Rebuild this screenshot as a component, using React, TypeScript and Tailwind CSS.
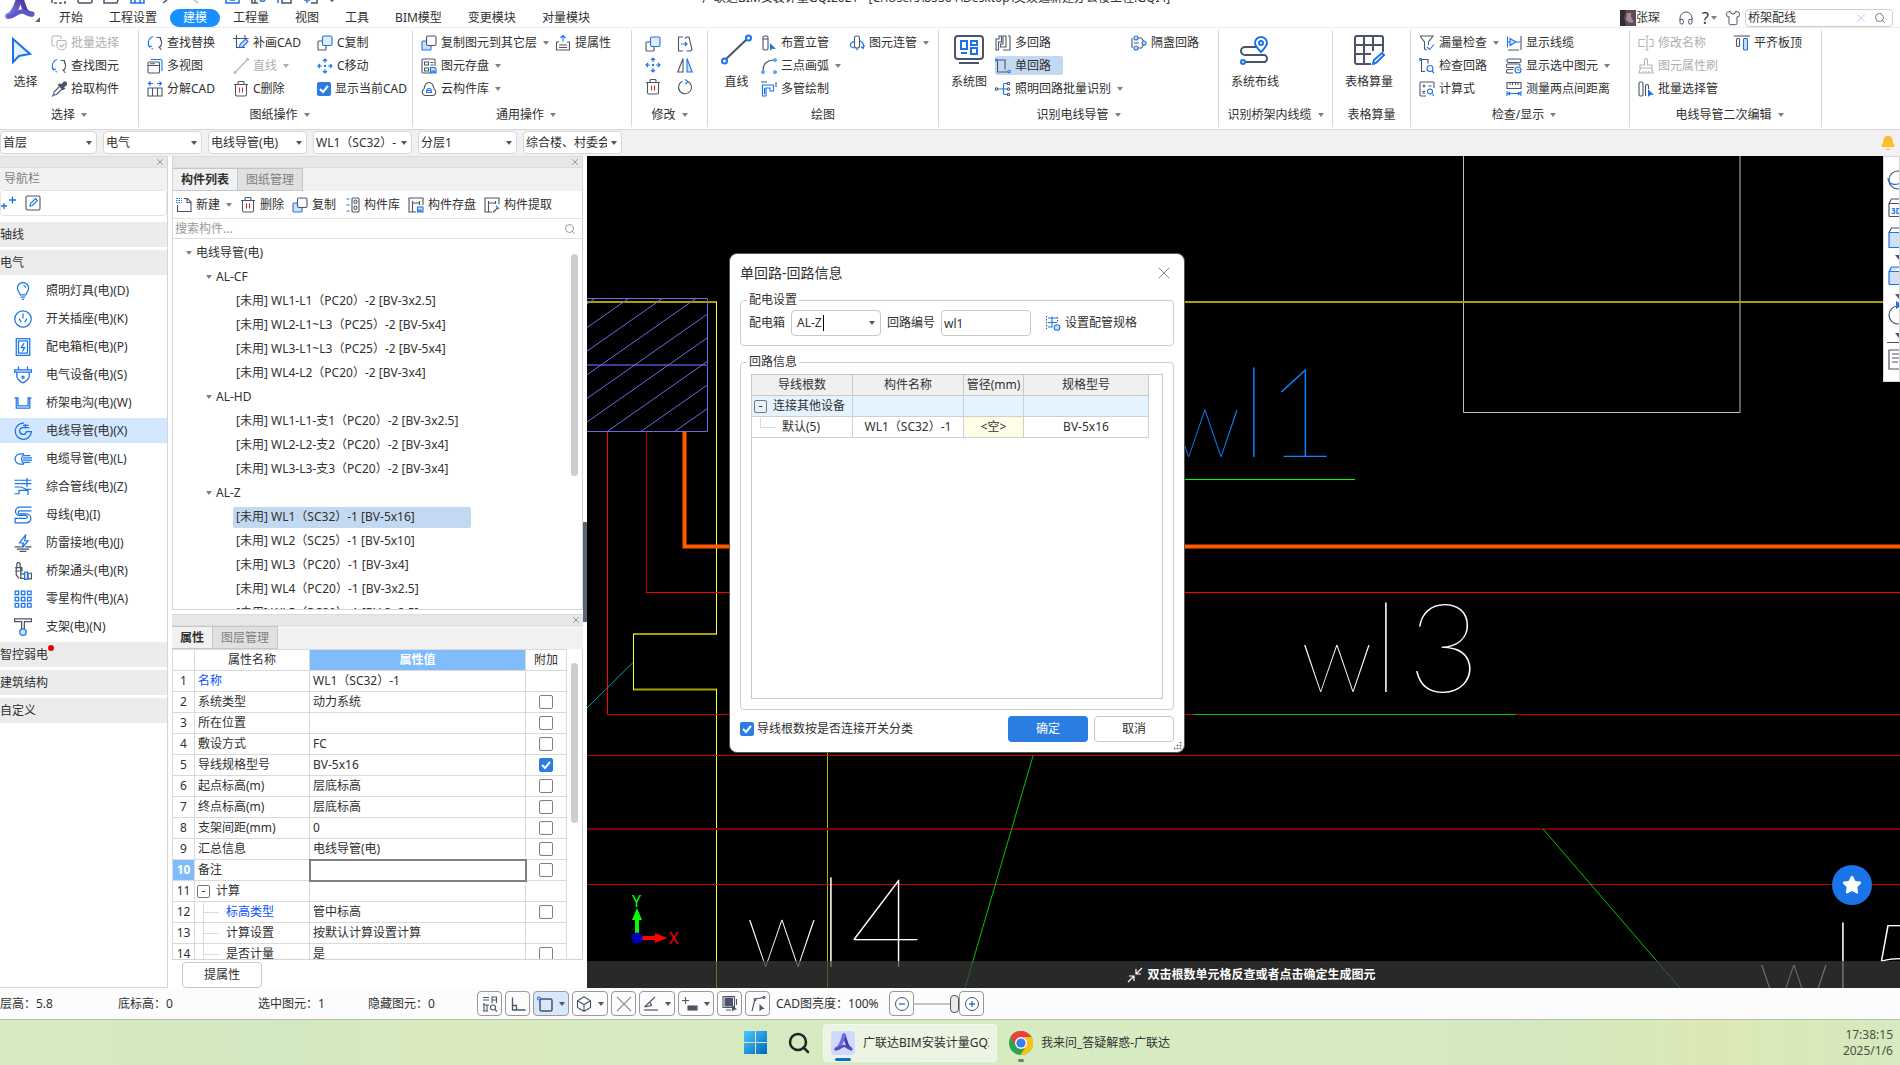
import React from 'react';
import { Headphones, Shirt, Search, X, Star, Bell } from 'lucide-react';

const D = '#4b5468';
const B = '#1a73e8';
const R = '#d33030';
const L = '#cfe0f8';

// small line icons, all on a 16 x 16 grid
const icons: Record<string, React.ReactNode> = {
    batchSelect: <g stroke="#b5b5b5"><path d="M4 11H2.500a1.500 1.500 0 0 1-1.500-1.500V2.500A1.500 1.500 0 0 1 2.500 1h6A1.500 1.500 0 0 1 10 2.500V4" /><path d="M7.500 5.500h6a1.500 1.500 0 0 1 1.500 1.500v3.500a4.500 4.500 0 0 1-9 0V7a1.500 1.500 0 0 1 1.500-1.500zM8.500 10l2 2 3-3" /></g>,
    find: <><path stroke={B} d="M6 1.500A6.500 6.500 0 0 0 2.500 11.500M1 9.500l1.500 2.500L5 11M4.500 13.500L6 14" /><path d="M9.500 2.500h4v3M13 3c2.500 3 2 7-.500 9.500M11.500 11.500l3 3.500" /></>,
    picker: <><path fill={D} d="M9 3l1.500 1L12.500 1.500a1.500 1.500 0 0 1 2.500 2.500L12.500 6l1 1.500-1.500 1L7.500 4z" /><path d="M8.500 5.500L3 11l-.500 3 3-.500L11 8" /><path stroke={B} d="M1 15.500l2-2" /></>,
    views: <><path stroke={B} d="M4 1.500h9.500a1.500 1.500 0 0 1 1.500 1.500v10" /><rect x="1" y="4" width="11.500" height="11" rx="1" /><path d="M1 7.500h11.500M3 5.800h5" /></>,
    split: <><path stroke={B} d="M6 2.500H1.500M3.500.500l-2 2 2 2M10 2.500h4.500M12.500.500l2 2-2 2" /><path d="M1 9V7h14v2M1 9v6h14V9M5.500 7v8M10.500 7v8" /></>,
    drawCad: <><path d="M3.500 0v12.500H12M0 3.500h12M12 3.500V0M12.500 3.500h3" /><path stroke={B} fill={L} d="M6.500 12.500L7 9.500 12.500 4 15 6.500 9.500 12z" /></>,
    lineOff: <g stroke="#b5b5b5"><path d="M3 13.500L13.500 2.500" /><circle cx="2" cy="14.500" r="1" /><circle cx="14.500" cy="1.500" r="1" /></g>,
    trash: <><path d="M1 3.500h14M5 3.500V1.500a1 1 0 0 1 1-1h4a1 1 0 0 1 1 1v2M2.500 3.500v10A1.500 1.500 0 0 0 4 15h8a1.500 1.500 0 0 0 1.500-1.500v-10" /><path stroke={R} d="M6.500 6.500v5M9.500 6.500v5" /></>,
    copy: <><path d="M5 6H2a1 1 0 0 0-1 1v7a1 1 0 0 0 1 1h6a1 1 0 0 0 1-1v-3" /><rect x="5.500" y="1" width="9.500" height="9.500" rx="1.500" stroke={B} fill="#e1edfc" /></>,
    copyDark: <><path stroke={B} fill={L} d="M5 6H2a1 1 0 0 0-1 1v7a1 1 0 0 0 1 1h7a1 1 0 0 0 1-1v-3z" /><rect x="5.500" y="1" width="9.500" height="9.500" rx="1.500" fill="#fff" /></>,
    move: <g stroke={B}><path d="M8 1v4M6 3l2-2 2 2M8 15v-4M6 13l2 2 2-2M1 8h4M3 6L1 8l2 2M15 8h-4M13 6l2 2-2 2" /><circle cx="8" cy="8" r=".6" /></g>,
    save: <><path d="M9 15H2a1 1 0 0 1-1-1V2a1 1 0 0 1 1-1h11a1 1 0 0 1 1 1v6M3.500 4h4v3h-4zM3.500 10h4v3h-4zM9.500 4.500h3M9.500 7h3" /><path stroke={B} fill={L} d="M9.500 9.500h4L15 11v4H9.500zM11 15v-2h2.500v2" /></>,
    cloud: <><path d="M4 14.500a3.500 3.500 0 0 1-1-6.500C3.500 4 5.500 1.500 8 1.500S12.500 4 13 8a3.500 3.500 0 0 1-1 6.500z" /><path stroke={B} d="M5.500 11.500c0-3 1-4 2.500-4s2.500 1 2.500 4zM6 9.500h4" /></>,
    lift: <><path stroke={B} d="M8 6.500v-6M5.500 3L8 .500 10.500 3" /><path d="M4 7H1.500v8h13V7H12M4 10h8M4 12.500h8" /></>,
    stretch: <><path d="M6 1H1.500v14H6M8 2.500L9.500 1h2.500l3 12.500-1.500 1.500h-4" /><path stroke={B} d="M4 8h6M8 6l2 2-2 2" /></>,
    mirror: <><path d="M6 1.500V15H.800z" /><path stroke={B} fill={L} d="M10 1.500V15h5.200z" /></>,
    rotate: <><path d="M11 2.500a6.500 6.500 0 1 1-5.500-.200" /><path stroke={B} d="M8 .500l3 2-2.500 2.500" /></>,
    pipeV: <><rect x="2" y="1" width="5" height="14" rx="1.500" /><path d="M2 4h5" /><path stroke="none" fill={B} d="M9 8l6 6-3.500-.200L9 15.500z" /></>,
    arc: <><path d="M2 12.500C2 6 6 2.500 12 2" /><g stroke={B}><circle cx="2" cy="14" r="1.300" /><circle cx="14" cy="2" r="1.300" /><circle cx="14" cy="14" r="1.300" /></g></>,
    multiPipe: <><path d="M0 1h6M15 1v5" /><path stroke={B} d="M1.500 15V4h11v6H9V7H5v8zM3.500 7v6" /></>,
    connect: <><rect x="5.500" y="1" width="5" height="12" rx="2" /><path stroke={B} d="M5 6.500c-5 2-5 5 0 6.500M11 6c4 2 4.500 4 3 7M12 11.500l2 2 1.500-3M8 13v2.500" /></>,
    multiLoop: <path d="M3.500 15H1V4h3V1h2.500v6H3.500zM8 1v8H5.500v3h5.500V1zM13 1h2v14H8" />,
    singleLoop: <><path d="M2.500 3v11H12M2.500 2H10v9.500" /><circle cx="1.500" cy="2" r="1" stroke={B} /><circle cx="14" cy="13.500" r="1.300" stroke={B} /></>,
    batchLoop: <><path stroke={B} d="M2.500 8H8M12 2.500H9.500a1 1 0 0 0-1 1v9a1 1 0 0 0 1 1H12M8.500 8H12" /><circle cx="1.500" cy="8" r="1.200" /><circle cx="13.500" cy="2.500" r="1.200" /><circle cx="13.500" cy="8" r="1.200" /><circle cx="13.500" cy="13.500" r="1.200" /></>,
    lampLoop: <><g stroke={B} fill={L}><circle cx="5" cy="3" r="2" /><circle cx="5" cy="13" r="2" /><circle cx="13" cy="8" r="2" /></g><path d="M1 3v10M7 3h3.500l2 3M7 13h3.500l2-3M3 8h5" /></>,
    funnel: <><path d="M1 1h13L9.500 7v3M1 1l4.500 6v7l2 1" /><path stroke={B} d="M8 12l2.500 2.500L15 9.500" /></>,
    checkLoop: <><path d="M2.500 1.500v12H6M2.500 1.500H9v4" /><circle cx="1.500" cy="1.500" r="1" stroke={B} /><g stroke={B}><circle cx="11" cy="10.500" r="3" /><path d="M13 13l2 2" /></g></>,
    calc: <><path d="M7 15H2a1 1 0 0 1-1-1V2a1 1 0 0 1 1-1h12a1 1 0 0 1 1 1v5M3.500 5h3M5 3.500v3M9.500 5h3M3.500 10l2.500 2.500M6 10l-2.500 2.500" /><g stroke={B}><circle cx="11" cy="10.500" r="2.500" /><path d="M13 12.500l2 2.500" /></g></>,
    showWire: <><path d="M15 1v14M2 15h11" /><path stroke={B} fill={L} d="M1.500 1.500v11M4 3.500l6 3.500-6 3.500zM1.500 7H4M10 7h4" /></>,
    showSel: <><rect x="1" y="1" width="14" height="3.500" rx="1.500" /><path d="M14 8.500V7a1 1 0 0 0-1-1H2a1 1 0 0 0 0 3.500h6M7 15H2a1.500 1.500 0 0 1 0-3.500h5" /><g stroke={B}><circle cx="12" cy="12" r="3" /><path d="M12 10.500V12h1.500" /></g></>,
    measure: <><path d="M1 1.500h14v6H1zM4 1.500v2.500M6.500 1.500v2.500M9.500 1.500v2.500M12 1.500v2.500" /><path stroke={B} d="M1 10v5M15 10v5M1 12.500h14M4 11l-2 1.500L4 14M12 11l2 1.500-2 1.500" /></>,
    rename: <g stroke="#b5b5b5"><path d="M7 4.500H1v7h6M11 4.500h4v7h-4M9 1v14M7.500 1h3M7.500 15h3" /></g>,
    brush: <g stroke="#b5b5b5"><path d="M6.500 7V2a1.500 1.500 0 0 1 3 0v5H14v3H2V7zM2.500 10L1 15h14l-1.500-5M5 15v-2M8 15v-2M11 15v-2" /></g>,
    selPipe: <><rect x="1" y="1" width="4" height="14" rx="1.500" /><path d="M7.500 15V5a1 1 0 0 1 3 0v3" /><path stroke="none" fill={B} d="M10 8l6 6-3-.200-3 2z" /></>,
    alignTop: <><path d="M0 1h16" /><rect x="2.500" y="3.500" width="3" height="8" rx="1" /><rect x="9.500" y="3.500" width="4" height="11.500" rx="1" stroke={B} fill={L} /></>,
    addNew: <><path d="M8 1.500h3.500L15 5v9.500H1.500V8M11 1.500V5.500h4" /><path stroke={B} strokeDasharray="1.500 1" d="M0 1.500h6M0 3.500h6M0 5.500h6" /></>,
    lib: <><path stroke={B} d="M5.500 2H1.500M5.500 8H1.500M5.500 14H1.500" strokeDasharray="3 1" /><rect x="8" y="1" width="7" height="14" rx="1" /><rect x="10" y="3" width="3" height="3.500" rx="1.500" /><rect x="10" y="9" width="3" height="3.500" rx="1.500" /></>,
    store: <><path d="M8 15H1V1h14v7M4.500 15V4M4.500 6h7M11.500 4v4" /><path stroke={B} fill={L} d="M9.500 10H15v5H9.500zM11 15v-2h2v2" /></>,
    extract: <><path d="M8 15H1V1h14v6M4.500 15V4M4.500 6h7M11.500 4v3M9 15.500l5-5" /><path stroke={B} d="M12 9l3 3" /></>,
    edit: <><rect x="1" y="1" width="14" height="14" rx="1.500" /><path stroke={B} d="M5 11l.500-2.500 5-5 2 2-5 5z" /></>,
    plus2: <path stroke={B} strokeWidth="1.300" d="M0 11h6M3 8v6M8 5h7M11.500 1.500v7" />,
    pipeSpec: <><path stroke={B} d="M7 1.500v11M3 3h9M3 7.500h9M3 12h4" /><path strokeDasharray="1.500 1.500" d="M1.500 1v13M12.500 2v6" /><circle cx="12" cy="12.500" r="2.800" stroke={B} fill={L} /></>,
    // navigation tree
    bulb: <g stroke={B}><path d="M5.500 11.500c0-2-2.500-3-2.500-6a5 5 0 0 1 10 0c0 3-2.500 4-2.500 6zM6 13.500h4M7 15.500h2M8.500 3a2.500 2.500 0 0 1 2 2" /></g>,
    socket: <g stroke={B}><circle cx="8" cy="8" r="7.300" /><path d="M8 3v4.500M4.500 7.500l2 3.500M11.500 7.500l-2 3.500" /></g>,
    box: <g stroke={B}><rect x="2" y=".600" width="12" height="14.800" /><rect x="4" y="2.600" width="8" height="10.800" /><path d="M9 4.500L6.500 8.500h3L7.500 12" /></g>,
    device: <g stroke={B}><path d="M.500 3.500h15v2H.500zM4 .500v3M12 .500v3M2.500 5.500v3.500c0 3 5.500 6 5.500 6s5.500-3 5.500-6V5.500" /><circle cx="8" cy="10" r="1" /></g>,
    tray: <path stroke={B} d="M.500 3.500h3v7h9v-7h3M2 3.500v9h12v-9" />,
    wire: <g stroke={B}><path d="M9 1A7.200 7.200 0 1 0 15.500 8.500H11a3 3 0 1 1-3-3.500h2V2M8 3h5M8 5h5.500" /></g>,
    cable: <g stroke={B}><path d="M9 3.500H5.500a4.500 4.500 0 0 0 0 9H9M9 3.500c-3 3-3 6 0 9M9 5h5.500M8 7h8M8 9h8M9 11h5.500" /></g>,
    pipes: <g stroke={B}><path d="M.500 2h15M.500 5h15M.500 8h6l4 2H15.500M.500 14h4V11h8v4M11.500 0v8" /></g>,
    bus: <g stroke={B}><path d="M15.500 1H5a3.700 3.700 0 0 0 0 7.400h5.500a1.300 1.300 0 0 1 0 2.600H1v4h10a3.700 3.700 0 0 0 0-8H5a1.300 1.300 0 0 1 0-2.600h10.500" /></g>,
    bolt: <><path stroke={B} d="M10.500.500L5 8h3.500L7 12.500 12.500 6H9.500z" /><path d="M.500 11.500H6M10 11.500h5.500M2.500 13.500h11M5 15.500h6" /></>,
    elbow: <><path d="M2 5h4v9.500h4M2 5v6.500L4.500 14.500M2.500 5V1.500l1-1h1l1 1V5M1 5h6V8H1M10 10.500H6M12.500 10v5H15.500v-5z" /><path stroke={B} d="M9.500 9h2.500v6.500H9.500z" /></>,
    grid9: <g stroke={B}>{[1, 6.500, 12].map((y) => [1, 6.500, 12].map((x) => <rect key={x + '-' + y} x={x} y={y} width="3.200" height="3.200" />))}</g>,
    support: <><path d="M.500.700h15v2.600H9.200V10H6.800V3.300H.500z" /><circle cx="8" cy="12.500" r="2.900" stroke={B} fill={L} /></>,
    // status bar
    stFind: <><path d="M1 1.500h6M1 4h6M10 7V1h4.500v6M10 4h4.500M2 7v8M1 9h6M5 9v6M1 15h5" /><circle cx="11" cy="11.500" r="2.500" /><path d="M13 13.500l2 2" /></>,
    ortho: <path strokeWidth="1.300" d="M2.500 1.500V14h13M2.500 9.500h4V14" />,
    rectSel: <><rect x="3" y="3" width="12" height="12" rx="1.500" strokeWidth="1.500" /><circle cx="2" cy="2.500" r="1.500" stroke={B} /></>,
    cube: <path d="M8 .700l6.500 4v6.800L8 15.300 1.500 11.500V4.700zM1.500 4.700L8 8.500l6.500-3.800M8 8.500v6.800" />,
    cross: <><path stroke="#8c919b" d="M1 1l14 14M15 1L1 15" /></>,
    angle: <><path d="M1.500 11L12 1M1.500 11l7-1.500L7 6" /><path stroke="#999" strokeWidth="2" d="M1 14h14" /></>,
    plusRect: <><path d="M0 4.500h7M3.500 1v7" /><rect x="6" y="10" width="9" height="4" fill={D} /></>,
    layers: <><rect x="2.500" y="1.500" width="8.500" height="9" fill={D} stroke="none" /><path d="M1 .500h11.500v11H1zM4 14h5M14.500 3v6" /><path fill={D} stroke="none" d="M10 8.500l5 5-2.500.300L10 15.500z" /></>,
    nodes: <><path d="M2 15L5 3l9-1.500" /><circle cx="5" cy="3.500" r="1" fill="#fff" /><circle cx="14" cy="1.500" r="1" fill="#fff" /><path fill={D} stroke="none" d="M9.500 8l5 5-2.500.300-2.500 2z" /></>,
};

function Icon({ name, size = 'h-4 w-4' }: { name: string; size?: string }) {
    return (
        <svg viewBox="0 0 16 16" className={size + ' shrink-0'} fill="none" stroke={D} strokeWidth="1.100">
            {icons[name]}
        </svg>
    );
}

function Tri({ className = 'text-[#808080]' }: { className?: string }) {
    return (
        <svg viewBox="0 0 6 4" className={'h-1 w-1.5 shrink-0 ' + className}>
            <path fill="currentColor" d="M0 0h6L3 4z" />
        </svg>
    );
}

function Check({ label, id, checked = false }: { label?: string; id?: string; checked?: boolean }) {
    return (
        <span className="relative inline-flex h-3.5 w-3.5 shrink-0">
            <input
                id={id}
                type="checkbox"
                aria-label={label}
                defaultChecked={checked}
                className="peer h-3.5 w-3.5 appearance-none rounded-xs border border-[#808080] bg-white checked:border-[#2b7de1] checked:bg-[#2b7de1]"
            />
            <svg viewBox="0 0 14 14" className="pointer-events-none absolute inset-0 hidden peer-checked:block" fill="none" stroke="#fff" strokeWidth="2">
                <path d="M3 7l3 3 5-6" />
            </svg>
        </span>
    );
}

interface ToolProps {
    icon: string;
    text: string;
    arrow?: boolean;
    off?: boolean;
    active?: boolean;
}

function Tool({ icon, text, arrow, off, active }: ToolProps) {
    return (
        <button
            disabled={off}
            className={
                'flex h-[19px] items-center gap-1 whitespace-nowrap rounded-xs ' +
                (off ? 'text-[#b0b0b0] ' : '') +
                (active ? 'bg-[#c3d9f2] pr-3' : '')
            }
        >
            <Icon name={icon} />
            {text}
            {arrow && <span className="ml-0.5"><Tri className={off ? 'text-[#b0b0b0]' : 'text-[#808080]'} /></span>}
        </button>
    );
}

function Col({ w = '', children }: { w?: string; children: React.ReactNode }) {
    return <div className={'flex shrink-0 flex-col items-start gap-1 ' + w}>{children}</div>;
}

function Group({ label, w, arrow = true, children }: { label: string; w: string; arrow?: boolean; children: React.ReactNode }) {
    return (
        <section className={'my-0.5 flex shrink-0 flex-col border-r border-[#dadada] ' + w}>
            <div className="flex h-[74px] pt-[3px]">{children}</div>
            <div className="flex h-6 items-center justify-center gap-1.5">
                {label}
                {arrow && <Tri />}
            </div>
        </section>
    );
}

function Big({ text, w, children }: { text: string; w: string; children: React.ReactNode }) {
    return (
        <button className={'flex h-[57px] shrink-0 flex-col items-center justify-between ' + w}>
            <svg viewBox="0 0 32 32" className="h-8 w-8" fill="none" stroke={D} strokeWidth="2">{children}</svg>
            {text}
        </button>
    );
}

const tabs = ['开始', '工程设置', '建模', '工程量', '视图', '工具', 'BIM模型', '变更模块', '对量模块'];

function Header() {
    return (
        <header className="relative bg-white">
            <svg viewBox="0 0 40 24" className="absolute left-0 top-0 h-6 w-10" fill="none" strokeLinecap="round">
                <defs>
                    <linearGradient id="logo" x1="0" y1="1" x2="1" y2="0"><stop stopColor="#8482ea" /><stop offset="1" stopColor="#453a9c" /></linearGradient>
                </defs>
                <path d="M20-4l4 11c1 4 4 7 8 7" stroke="#4a40a6" strokeWidth="5" />
                <path d="M8 16c6-1 9-10 12-20" stroke="url(#logo)" strokeWidth="6" />
                <path d="M9 16.500c6 0 7-5 13-5 4 0 6 4 10 3" stroke="#5f58c8" strokeWidth="4.500" />
                <path d="M40 17v5h-5z" fill="#666" />
            </svg>
            <div className="flex h-[9px] items-start overflow-hidden pl-[51px]">
                <svg viewBox="0 0 300 5" className="h-[5px] w-[300px]" fill="none" stroke={D} strokeWidth="1.500">
                    <path strokeDasharray="3 2" d="M1 0v3h13V0" />
                    <path d="M27 0v2l1 1h12l1-1V0M53 0v3h13l1-3" />
                    <path stroke={B} d="M80 0v3h13V0M84 0v3M89 0v3" />
                    <path d="M112 3l4-3" />
                    <path stroke="#bbb" d="M147 3l-4-3" />
                    <path stroke={B} d="M175 0v3h13V0M179 0h5" />
                    <path d="M201 0v3h6M204 0v3" />
                    <path stroke={B} d="M209 0a3 3 0 0 0 5 0" />
                    <path d="M231 0v3h9V0" />
                    <path stroke={B} d="M227 0v3M253 0h6M256 0v3" />
                    <path d="M260 3h6V0" />
                    <path stroke="none" fill={D} d="M279 0h4l-2 2z" />
                </svg>
                <span className="-mt-2.5 ml-[351px] whitespace-nowrap">广联达BIM安装计量GQI2021 - [C:\Users\85364\Desktop\美娱逛新建办公楼工程.GQI4]</span>
            </div>
            <div className="flex h-[19px] items-center justify-between border-b border-[#ececec] pl-[46px]">
                <nav className="flex h-full">
                    {tabs.map((t) => (
                        <button key={t} className={t === '建模' ? 'rounded-full bg-[#1890ff] px-[13px] text-white' : 'px-[13px]'}>
                            {t}
                        </button>
                    ))}
                </nav>
                <div className="flex items-center text-[#333]">
                    <svg viewBox="0 0 16 16" className="h-4 w-4">
                        <path fill="#5d4c58" d="M0 0h16v16H0z" />
                        <path fill="#342a36" d="M0 0h6l-2 8 2 8H0z" />
                        <path fill="#a08c94" d="M7 3h4v4l3 5-4 1-4-3z" />
                    </svg>
                    张琛
                    <Headphones className="ml-[18px] h-4 w-4 text-[#4b5468]" strokeWidth={1.5} />
                    <button className="mx-2 flex items-center gap-0.5 text-base">?<Tri /></button>
                    <Shirt className="h-4 w-4 text-[#4b5468]" strokeWidth={1.5} />
                    <label className="ml-1 mr-[7px] flex h-[18px] w-[148px] items-center rounded-sm border border-[#d0d0d0] px-0.5">
                        <input aria-label="搜索功能" defaultValue="桥架配线" className="min-w-0 flex-1 outline-none" />
                        <X className="mr-1.5 h-3.5 w-3.5 text-[#a5cdf5]" strokeWidth={1.5} />
                        <Search className="mr-1 h-3 w-3 text-[#777]" />
                    </label>
                </div>
            </div>
        </header>
    );
}

function Ribbon() {
    return (
        <div className="flex h-[102px] overflow-hidden border-b border-[#d4d4d4] bg-white">
            <Group label="选择" w="w-[139px]">
                <Big text="选择" w="w-[51px]">
                    <path stroke={B} fill="#eaf2fd" d="M3 6v23l6-6 11-2z" />
                </Big>
                <Col>
                    <Tool icon="batchSelect" text="批量选择" off />
                    <Tool icon="find" text="查找图元" />
                    <Tool icon="picker" text="拾取构件" />
                </Col>
            </Group>
            <Group label="图纸操作" w="w-[274px] pl-2">
                <Col w="w-[86px]">
                    <Tool icon="find" text="查找替换" />
                    <Tool icon="views" text="多视图" />
                    <Tool icon="split" text="分解CAD" />
                </Col>
                <Col w="w-[84px]">
                    <Tool icon="drawCad" text="补画CAD" />
                    <Tool icon="lineOff" text="直线" arrow off />
                    <Tool icon="trash" text="C删除" />
                </Col>
                <Col>
                    <Tool icon="copy" text="C复制" />
                    <Tool icon="move" text="C移动" />
                    <label htmlFor="cadShow" className="flex h-[19px] items-center gap-1 whitespace-nowrap">
                        <Check id="cadShow" checked />
                        显示当前CAD
                    </label>
                </Col>
            </Group>
            <Group label="通用操作" w="w-[219px] pl-2">
                <Col w="w-[134px]">
                    <Tool icon="copyDark" text="复制图元到其它层" arrow />
                    <Tool icon="save" text="图元存盘" arrow />
                    <Tool icon="cloud" text="云构件库" arrow />
                </Col>
                <Col><Tool icon="lift" text="提属性" /></Col>
            </Group>
            <Group label="修改" w="w-[76px]">
                <div className="grid h-[65px] grid-cols-2 items-center gap-x-4 pl-[13px]">
                    {['copy', 'stretch', 'move', 'mirror', 'trash', 'rotate'].map((n) => (
                        <button key={n} aria-label={n}><Icon name={n} /></button>
                    ))}
                </div>
            </Group>
            <Group label="绘图" w="w-[231px]" arrow={false}>
                <Big text="直线" w="w-[53px] pl-1">
                    <path d="M5 26L25 7" />
                    <g stroke={B}><circle cx="3.500" cy="28" r="2.500" /><circle cx="27.500" cy="5" r="2.500" /></g>
                </Big>
                <Col w="w-[88px]">
                    <Tool icon="pipeV" text="布置立管" />
                    <Tool icon="arc" text="三点画弧" arrow />
                    <Tool icon="multiPipe" text="多管绘制" />
                </Col>
                <Col><Tool icon="connect" text="图元连管" arrow /></Col>
            </Group>
            <Group label="识别电线导管" w="w-[280px]">
                <Big text="系统图" w="w-14 pl-1">
                    <rect x="2" y="3" width="28" height="23" rx="3" />
                    <g stroke={B}><path d="M8 8h6v8H8zM18 8h6v4h-6zM18 15h6v6h-6zM8 20h6" /></g>
                    <path d="M6 30h20" />
                </Big>
                <Col w="w-[136px]">
                    <Tool icon="multiLoop" text="多回路" />
                    <Tool icon="singleLoop" text="单回路" active />
                    <Tool icon="batchLoop" text="照明回路批量识别" arrow />
                </Col>
                <Col><Tool icon="lampLoop" text="隔盏回路" /></Col>
            </Group>
            <Group label="识别桥架内线缆" w="w-[114px]">
                <Big text="系统布线" w="w-[72px]">
                    <path d="M18 14H6a4 4 0 0 0 0 8h20a4 4 0 0 1 0 7H6" />
                    <g stroke={B}><path d="M22 19c-4-4-6-6-6-9a6 6 0 0 1 12 0c0 3-2 5-6 9z" /><circle cx="22" cy="10" r="2" /><circle cx="4" cy="29" r="2" /></g>
                </Big>
            </Group>
            <Group label="表格算量" w="w-[78px]" arrow={false}>
                <Big text="表格算量" w="w-[72px]">
                    <path d="M18 31H4a2 2 0 0 1-2-2V5a2 2 0 0 1 2-2h24a2 2 0 0 1 2 2v14M2 12h28M2 21h16M11 3v28M20 3v15" />
                    <path stroke={B} d="M20 31l1-4 8-7 2 2-8 8z" />
                </Big>
            </Group>
            <Group label="检查/显示" w="w-[219px] pl-2">
                <Col w="w-[87px]">
                    <Tool icon="funnel" text="漏量检查" arrow />
                    <Tool icon="checkLoop" text="检查回路" />
                    <Tool icon="calc" text="计算式" />
                </Col>
                <Col>
                    <Tool icon="showWire" text="显示线缆" />
                    <Tool icon="showSel" text="显示选中图元" arrow />
                    <Tool icon="measure" text="测量两点间距离" />
                </Col>
            </Group>
            <Group label="电线导管二次编辑" w="w-[192px] pl-2">
                <Col w="w-24">
                    <Tool icon="rename" text="修改名称" off />
                    <Tool icon="brush" text="图元属性刷" off />
                    <Tool icon="selPipe" text="批量选择管" />
                </Col>
                <Col><Tool icon="alignTop" text="平齐板顶" /></Col>
            </Group>
        </div>
    );
}

const filters = ['首层', '电气', '电线导管(电)', 'WL1（SC32）-1', '分层1', '综合楼、村委会'];

function Filters() {
    return (
        <div className="flex h-[26px] items-start gap-1.5 bg-[#f1f1f1] pt-px">
            {filters.map((f, i) => (
                <span key={f} className={'relative h-[23px] ' + (i === 0 ? 'w-[97px]' : 'w-[99px]')}>
                    <select aria-label={f} className="h-full w-full appearance-none overflow-hidden rounded-sm border border-[#d8d8d8] bg-white pl-0.5 pr-3.5">
                        <option>{f}</option>
                    </select>
                    <span className="pointer-events-none absolute right-[5px] top-2.5 flex"><Tri className="text-[#555]" /></span>
                </span>
            ))}
            <Bell className="ml-auto mr-1 mt-1 h-4 w-4 text-[#fbc02d]" fill="#fbc02d" />
        </div>
    );
}

const navItems = [
    { icon: 'bulb', text: '照明灯具(电)(D)' },
    { icon: 'socket', text: '开关插座(电)(K)' },
    { icon: 'box', text: '配电箱柜(电)(P)' },
    { icon: 'device', text: '电气设备(电)(S)' },
    { icon: 'tray', text: '桥架电沟(电)(W)' },
    { icon: 'wire', text: '电线导管(电)(X)' },
    { icon: 'cable', text: '电缆导管(电)(L)' },
    { icon: 'pipes', text: '综合管线(电)(Z)' },
    { icon: 'bus', text: '母线(电)(I)' },
    { icon: 'bolt', text: '防雷接地(电)(J)' },
    { icon: 'elbow', text: '桥架通头(电)(R)' },
    { icon: 'grid9', text: '零星构件(电)(A)' },
    { icon: 'support', text: '支架(电)(N)' },
];

function PanelBar() {
    return (
        <div className="flex h-3 shrink-0 items-center justify-end border-y border-[#dcdcdc] bg-[#e7e7e7] pr-0.5">
            <button aria-label="关闭" className="flex"><X className="h-2.5 w-2.5 text-[#888]" /></button>
        </div>
    );
}

function NavPanel() {
    const head = 'flex h-[25px] w-full items-center bg-[#ececec]';
    return (
        <aside className="flex w-[168px] shrink-0 flex-col border-b border-r border-[#d4d4d4] bg-white">
            <PanelBar />
            <div className="flex h-[22px] items-center bg-[#f1f1f1] pl-1 text-[#808080]">导航栏</div>
            <div className="flex h-[26px] items-center gap-2 rounded-sm border border-[#e4e4e4]">
                <button aria-label="展开"><Icon name="plus2" /></button>
                <button aria-label="编辑"><Icon name="edit" /></button>
            </div>
            <div className="flex flex-col gap-[3px] pt-1.5">
                <button className={head}>轴线</button>
                <button className={head}>电气</button>
                {navItems.map((n) => (
                    <button key={n.icon} className={'flex h-[25px] items-center gap-3.5 pl-3.5 ' + (n.icon === 'wire' ? 'bg-[#d3e7ff]' : '')}>
                        <Icon name={n.icon} size="h-[18px] w-[18px]" />
                        {n.text}
                    </button>
                ))}
                <button className={head}>
                    智控弱电<span className="mb-3.5 h-1.5 w-1.5 rounded-full bg-red-600" />
                </button>
                <button className={head}>建筑结构</button>
                <button className={head}>自定义</button>
            </div>
        </aside>
    );
}

const tree = [
    { name: 'AL-CF', items: ['WL1-L1（PC20）-2 [BV-3x2.5]', 'WL2-L1~L3（PC25）-2 [BV-5x4]', 'WL3-L1~L3（PC25）-2 [BV-5x4]', 'WL4-L2（PC20）-2 [BV-3x4]'] },
    { name: 'AL-HD', items: ['WL1-L1-支1（PC20）-2 [BV-3x2.5]', 'WL2-L2-支2（PC20）-2 [BV-3x4]', 'WL3-L3-支3（PC20）-2 [BV-3x4]'] },
    { name: 'AL-Z', items: ['WL1（SC32）-1 [BV-5x16]', 'WL2（SC25）-1 [BV-5x10]', 'WL3（PC20）-1 [BV-3x4]', 'WL4（PC20）-1 [BV-3x2.5]', 'WL5（PC20）-1 [BV-3x2.5]'] },
];

function PanelTabs({ on, off }: { on: string; off: string }) {
    return (
        <div className="flex h-[23px] shrink-0 bg-[#f1f1f1]">
            <button className="border border-l-0 border-[#c4c6cc] bg-[#f1f1f1] px-2 font-bold">{on}</button>
            <button className="border border-l-0 border-[#c4c6cc] bg-[#e0e0e0] px-2 text-[#808080]">{off}</button>
        </div>
    );
}

function ComponentPanel() {
    return (
        <section className="flex min-h-0 flex-[454] flex-col border border-t-0 border-[#d4d4d4] bg-white">
            <PanelBar />
            <PanelTabs on="构件列表" off="图纸管理" />
            <div className="flex h-7 shrink-0 items-center gap-2 border-b border-[#e4e4e4] pl-[3px]">
                <Tool icon="addNew" text="新建" arrow />
                <Tool icon="trash" text="删除" />
                <Tool icon="copyDark" text="复制" />
                <Tool icon="lib" text="构件库" />
                <Tool icon="store" text="构件存盘" />
                <Tool icon="extract" text="构件提取" />
            </div>
            <label className="flex h-5 shrink-0 items-center border-b border-[#e0e0e0] pl-0.5 pr-1.5">
                <input aria-label="搜索构件" placeholder="搜索构件..." className="flex-1 outline-none placeholder:text-[#999]" />
                <Search className="h-3 w-3 text-[#999]" />
            </label>
            <div className="flex min-h-0 flex-1">
                <div className="min-w-0 flex-1 overflow-hidden pt-0.5">
                    <div className="flex h-6 items-center gap-1 pl-[13px]"><Tri />电线导管(电)</div>
                    {tree.map((g) => (
                        <div key={g.name}>
                            <div className="flex h-6 items-center gap-1 pl-[33px]"><Tri />{g.name}</div>
                            {g.items.map((t) => (
                                <div key={t} className="flex h-6 items-center pl-[60px]">
                                    <button className={'flex h-[21px] items-center whitespace-nowrap rounded-xs px-[3px] ' + (t === tree[2].items[0] ? 'w-[238px] bg-[#c3d9f2]' : '')}>
                                        [未用] {t}
                                    </button>
                                </div>
                            ))}
                        </div>
                    ))}
                </div>
                <div className="mr-1 mt-[15px] h-[222px] w-[7px] rounded-full bg-[#cdcdcd]" />
            </div>
        </section>
    );
}

interface Prop {
    name: string;
    value: string;
    check?: boolean | null;
    sub?: boolean;
}

const props: Prop[] = [
    { name: '名称', value: 'WL1（SC32）-1', check: null },
    { name: '系统类型', value: '动力系统' },
    { name: '所在位置', value: '' },
    { name: '敷设方式', value: 'FC' },
    { name: '导线规格型号', value: 'BV-5x16', check: true },
    { name: '起点标高(m)', value: '层底标高' },
    { name: '终点标高(m)', value: '层底标高' },
    { name: '支架间距(mm)', value: '0' },
    { name: '汇总信息', value: '电线导管(电)' },
    { name: '备注', value: '' },
    { name: '计算', value: '', check: null },
    { name: '标高类型', value: '管中标高', sub: true },
    { name: '计算设置', value: '按默认计算设置计算', check: null, sub: true },
    { name: '是否计量', value: '是', sub: true },
];

function PropertyPanel() {
    const cell = 'h-[21px] border border-[#dadada] p-0 ';
    return (
        <section className="flex min-h-0 flex-[374] flex-col bg-white">
            <PanelBar />
            <PanelTabs on="属性" off="图层管理" />
            <div className="flex min-h-0 flex-1 overflow-hidden border-b border-r border-[#d4d4d4]">
                <div className="min-w-0 flex-1 overflow-hidden">
                    <table className="w-full table-fixed border-collapse">
                        <colgroup>
                            <col className="w-[22px]" />
                            <col className="w-[115px]" />
                            <col />
                            <col className="w-[41px]" />
                        </colgroup>
                        <thead>
                            <tr>
                                <th className={cell} />
                                <th className={cell + 'font-normal'}>属性名称</th>
                                <th className={cell + 'border-[#6aa9ee] bg-[#80bbfb] font-bold text-white'}>属性值</th>
                                <th className={cell + 'font-normal'}>附加</th>
                            </tr>
                        </thead>
                        <tbody>
                            {props.map((p, i) => (
                                <tr key={p.name}>
                                    <td className={cell + 'text-center ' + (i === 9 ? 'bg-[#80bbfb] font-bold text-white' : '')}>{i + 1}</td>
                                    <td className={cell}>
                                        <div className={'flex items-center ' + (p.name === '名称' || p.name === '标高类型' ? 'text-[#0a50ff]' : '')}>
                                            {p.name === '计算' && <button className="ml-0.5 mr-1.5 flex h-[13px] w-[13px] items-center justify-center rounded-xs border border-[#777] leading-none">-</button>}
                                            {p.sub && <span className="-my-0.5 ml-2 mr-1 flex h-5 w-4 items-center border-l border-[#dadada]"><span className="h-px w-full bg-[#dadada]" /></span>}
                                            <span className={p.name === '计算' ? '' : 'pl-[3px]'}>{p.name}</span>
                                        </div>
                                    </td>
                                    <td className={cell + 'pl-[3px] ' + (i === 9 ? 'outline-2 -outline-offset-1 outline-[#808080]' : '')}>{p.value}</td>
                                    <td className={cell}>
                                        <div className="flex justify-center">
                                            {p.check !== null && <Check label={p.name} checked={p.check} />}
                                        </div>
                                    </td>
                                </tr>
                            ))}
                        </tbody>
                    </table>
                </div>
                <div className="ml-1 mr-1 mt-3.5 h-[160px] w-[7px] rounded-full bg-[#cdcdcd]" />
            </div>
            <div className="flex h-7 shrink-0 items-center pl-2.5 pt-px">
                <button className="h-[26px] w-20 rounded-sm border border-[#c8c8c8]">提属性</button>
            </div>
        </section>
    );
}

function Drawing() {
    return (
        <svg className="absolute inset-0 h-full w-full" fill="none">
            <defs>
                <clipPath id="hatch"><path d="M587 299h121v132H587z" /></clipPath>
            </defs>
            <g transform="translate(-587 -156)">
                <path stroke="#c0c0c0" d="M1463.500 150v262.500h276.500V150" />
                <g stroke="#b8b000" strokeWidth="2">
                    <path d="M587 302h130M800 302h1400M633 634h84M633 689.500h84" stroke="#a8a000" />
                    <path d="M827.500 740v260" strokeWidth="1" />
                </g>
                <path stroke="#ffff2a" d="M716.500 302v332M633.500 634v56M716.500 689v300" />
                <g stroke="#6d6ae8">
                    <path d="M580 298.500h127.500V431.500H580" />
                    <path d="M580 365h128" stroke="#3d3a90" strokeWidth="2" />
                    <g clipPath="url(#hatch)">
                        {[0, 1, 2, 3, 4, 5, 6, 7, 8].map((k) => (
                            <path key={k} d={`M587 ${304 + k * 23.6}l121 -84.700`} />
                        ))}
                    </g>
                </g>
                <path stroke="#ff0000" d="M607.500 432v282M646 592.500h1600" />
                <path stroke="#b00000" d="M646.500 432v160" />
                <path stroke="#c80000" d="M607 714.500h1600M587 755.500h1600M587 884.500h1600" />
                <path stroke="#800000" strokeWidth="2" d="M587 829h1600" />
                <path stroke="#ff5a00" strokeWidth="4" d="M684.500 432v114.500h1600" />
                <path stroke="#00a8a8" d="M587 708l46.500-46" />
                <path stroke="#00c800" d="M1194 714.500h322M1033 756l-68 232M1543 829l137 159" />
                <path stroke="#00ff00" d="M1100 479.500h255" />
            </g>
            <g transform="translate(-587 -156)" className="font-[Lato] font-thin">
                <g fill="#0a84ff">
                    <text x="1169" y="457" className="text-[96px]">w</text>
                    <text x="1241" y="457" className="text-[124px]">l</text>
                    <text x="1266" y="457" className="text-[124px]">1</text>
                </g>
                <g fill="#fff">
                    <text x="1301" y="692" className="text-[96px]">w</text>
                    <text x="1373" y="692" className="text-[124px]">l</text>
                    <text x="1408" y="692" className="text-[124px]">3</text>
                    <text x="746" y="967" className="text-[96px]">w</text>
                    <text x="818" y="967" className="text-[124px]">l</text>
                    <text x="850" y="967" className="text-[124px]">4</text>
                    <text x="1758" y="1012" className="text-[96px]">w</text>
                    <text x="1830" y="1012" className="text-[124px]">l</text>
                    <text x="1866" y="1012" className="text-[124px]">5</text>
                </g>
            </g>
            <g transform="translate(-587 -156)">
                <path stroke="#00ff00" strokeWidth="4" d="M637 936v-18" />
                <path fill="#00ff00" d="M632 920h10l-5-12z" />
                <path stroke="#ff0000" strokeWidth="4" d="M640 938h16" />
                <path fill="#ff0000" d="M655 933v10l12-5z" />
                <circle cx="637" cy="938" r="5.500" fill="#0000c0" />
                <text x="632" y="907" fill="#00ff00" className="text-base">Y</text>
                <text x="669" y="944" fill="#ff0000" className="text-base">X</text>
            </g>
        </svg>
    );
}

function ViewBar() {
    const box = 'M2 5.500L4.500 1H20M2 5.500h18v13H3a1 1 0 0 1-1-1z';
    return (
        <div className="absolute right-0 top-0 h-[226px] w-[17px] overflow-hidden border border-[#d8d8d8] bg-white pl-[3px] pt-3">
            <svg viewBox="0 0 20 204" className="h-[204px] w-5" fill="none" stroke={D} strokeWidth="1.200">
                <circle cx="11" cy="11" r="9" />
                <path stroke={B} d="M1 9c0 7 8 8 14 4" />
                <g transform="translate(0 29)"><path d={box} /><text x="4" y="16" fill={B} stroke="none" className="text-[8px] font-bold">3D</text></g>
                <g transform="translate(0 58)"><path fill={L} stroke={B} d="M2 5.500h18v15H2z" /><path d="M2 5.500L4.500 1H20" /></g>
                <path fill={D} stroke="none" d="M8 86h8l-4 5z" />
                <g transform="translate(0 97)"><path fill={L} stroke={B} d={box} /></g>
                <path fill={D} stroke="none" d="M8 125h8l-4 5z" />
                <circle cx="11" cy="146" r="9" />
                <path fill={B} stroke="none" d="M9 132l7 4-7 4z" />
                <path fill={D} stroke="none" d="M8 164h8l-4 5z" />
                <path d="M0 173.500h20M2 181h18v19H2zM5 185h9M5 189h9M5 193h6" />
            </svg>
        </div>
    );
}

function LoopDialog() {
    const th = 'h-[21px] border border-[#c8c8c8] bg-[#f0f0f0] p-0 font-normal whitespace-nowrap';
    const td = 'h-[21px] border border-[#d0d0d0] p-0 text-center ';
    return (
        <div role="dialog" aria-label="单回路-回路信息" className="absolute left-[142px] top-[97px] flex h-[500px] w-[456px] flex-col rounded-lg border border-[#555] bg-white px-2.5">
            <div className="flex h-[38px] shrink-0 items-center justify-between text-sm">
                单回路-回路信息
                <button aria-label="关闭"><X className="h-5 w-5 text-[#888]" strokeWidth={1.2} /></button>
            </div>
            <fieldset className="h-[54px] shrink-0 rounded-sm border border-[#cdcdcd] px-1.5">
                <legend className="px-0.5">配电设置</legend>
                <div className="flex items-center gap-1.5 pl-0.5 pt-0.5">
                    <label htmlFor="dbox">配电箱</label>
                    <span className="relative h-[26px] w-[90px]">
                        <select id="dbox" className="h-full w-full appearance-none rounded-sm border border-[#c8c8c8] pl-[5px]">
                            <option>AL-Z</option>
                        </select>
                        <span className="pointer-events-none absolute left-8 top-[5px] h-4 w-px bg-black" />
                        <span className="pointer-events-none absolute right-1.5 top-[11px] flex"><Tri className="text-[#555]" /></span>
                    </span>
                    <label htmlFor="loopNo">回路编号</label>
                    <input id="loopNo" defaultValue="wl1" className="h-[26px] w-[90px] rounded-sm border border-[#c8c8c8] px-0.5" />
                    <button className="ml-2 flex items-center gap-1"><Icon name="pipeSpec" />设置配管规格</button>
                </div>
            </fieldset>
            <fieldset className="mt-2 flex min-h-0 flex-1 flex-col rounded-sm border border-[#cdcdcd] px-2.5 pb-2.5">
                <legend className="-ml-1 px-0.5">回路信息</legend>
                <div className="mt-1 min-h-0 flex-1 border border-[#c8c8c8]">
                    <table className="-ml-px -mt-px w-[398px] table-fixed border-collapse">
                        <thead>
                            <tr>
                                <th className={th + ' w-[101px]'}>导线根数</th>
                                <th className={th + ' w-[111px]'}>构件名称</th>
                                <th className={th + ' w-[60px]'}>管径(mm)</th>
                                <th className={th}>规格型号</th>
                            </tr>
                        </thead>
                        <tbody>
                            <tr className="bg-[#e5f2ff]">
                                <td className={td}>
                                    <div className="flex items-center gap-1.5 pl-0.5">
                                        <button className="flex h-[13px] w-[13px] items-center justify-center rounded-xs border border-[#777] leading-none">-</button>
                                        连接其他设备
                                    </div>
                                </td>
                                <td className={td} />
                                <td className={td} />
                                <td className={td} />
                            </tr>
                            <tr>
                                <td className={td}>
                                    <div className="flex items-center pl-2">
                                        <span className="mb-2 mr-1.5 h-2.5 w-4 border-b border-l border-[#dadada]" />
                                        默认(5)
                                    </div>
                                </td>
                                <td className={td}>WL1（SC32）-1</td>
                                <td className={td + 'bg-[#fffde6]'}>&lt;空&gt;</td>
                                <td className={td}>BV-5x16</td>
                            </tr>
                        </tbody>
                    </table>
                </div>
            </fieldset>
            <div className="flex h-[42px] shrink-0 items-center gap-1.5 pb-2 pt-1">
                <label htmlFor="bySwitch" className="mr-auto flex items-center gap-[3px]">
                    <Check id="bySwitch" checked />
                    导线根数按是否连接开关分类
                </label>
                <button className="h-[26px] w-20 rounded-sm bg-[#2b7de1] text-white">确定</button>
                <button className="h-[26px] w-20 rounded-sm border border-[#c8c8c8]">取消</button>
            </div>
            <svg viewBox="0 0 8 8" className="absolute bottom-0.5 right-0.5 h-2 w-2" fill="#777">
                <path d="M6 0h1v1H6zM3 3h1v1H3zM6 3h1v1H6zM0 6h1v1H0zM3 6h1v1H3zM6 6h1v1H6z" stroke="#777" />
            </svg>
        </div>
    );
}

function StatusBar() {
    const btn = 'flex h-[25px] items-center justify-center gap-1.5 rounded-sm border border-[#999] ';
    const btns = [
        { icon: 'stFind' }, { icon: 'ortho' }, { icon: 'rectSel', arrow: true }, { icon: 'cube', arrow: true }, { icon: 'cross' },
        { icon: 'angle', arrow: true }, { icon: 'plusRect', arrow: true }, { icon: 'layers' }, { icon: 'nodes' },
    ];
    return (
        <footer className="flex h-8 shrink-0 items-center border-b border-[#b4bda8] bg-[#fcfcfc]">
            <div className="flex w-[477px]">
                <span className="w-[118px]">层高：5.8</span>
                <span className="w-[140px]">底标高：0</span>
                <span className="w-[110px]">选中图元：1</span>
                <span>隐藏图元：0</span>
            </div>
            <div className="flex items-center gap-[3px]">
                {btns.map((b) => (
                    <button
                        key={b.icon}
                        aria-label={b.icon}
                        className={btn + (b.arrow ? 'w-9 ' : 'w-[25px] ') + (b.icon === 'rectSel' ? 'border-[#2b7de1] bg-[#d8e7fb]' : '')}
                    >
                        <Icon name={b.icon} />
                        {b.arrow && <Tri className="text-[#555]" />}
                    </button>
                ))}
            </div>
            <label htmlFor="bright" className="ml-1.5 w-[113px]">CAD图亮度：100%</label>
            <button aria-label="减小" className={btn + 'w-[25px]'}>
                <svg viewBox="0 0 16 16" className="h-4 w-4" fill="none" stroke={D}><circle cx="8" cy="8" r="6.500" /><path stroke={B} strokeWidth="1.300" d="M5 8h6" /></svg>
            </button>
            <input
                id="bright"
                type="range"
                defaultValue={100}
                className="h-5 w-[45px] appearance-none bg-[linear-gradient(#c4c4c4,#c4c4c4)] bg-[length:100%_2px] bg-center bg-no-repeat [&::-webkit-slider-thumb]:h-[18px] [&::-webkit-slider-thumb]:w-[9px] [&::-webkit-slider-thumb]:appearance-none [&::-webkit-slider-thumb]:rounded-sm [&::-webkit-slider-thumb]:border [&::-webkit-slider-thumb]:border-[#555] [&::-webkit-slider-thumb]:bg-[#e8eaee]"
            />
            <button aria-label="增大" className={btn + 'w-[25px]'}>
                <svg viewBox="0 0 16 16" className="h-4 w-4" fill="none" stroke={D}><circle cx="8" cy="8" r="6.500" /><path stroke={B} strokeWidth="1.300" d="M5 8h6M8 5v6" /></svg>
            </button>
        </footer>
    );
}

function Taskbar() {
    return (
        <div className="relative flex h-[45px] shrink-0 items-center bg-[linear-gradient(90deg,#d8eac0,#d3e9c3_15%,#d9e9bd_23%,#d6eac2_40%,#d8ecc2_65%,#d4e9c2_80%,#dbe9b4_90%,#d6eac0)]">
            <div className="flex flex-1 items-center justify-center gap-3 pl-3.5">
                <button aria-label="开始">
                    <svg viewBox="0 0 23 23" className="h-[23px] w-[23px]">
                        <defs><linearGradient id="win" x1="0" y1="0" x2="1" y2="1"><stop stopColor="#4cc8fb" /><stop offset="1" stopColor="#0067c0" /></linearGradient></defs>
                        <path fill="url(#win)" d="M0 0h11v11H0zM12 0h11v11H12zM0 12h11v11H0zM12 12h11v11H12z" />
                    </svg>
                </button>
                <button aria-label="搜索" className="ml-2"><Search className="h-6 w-6 text-[#222]" strokeWidth={2.5} /></button>
                <button className="relative flex h-[38px] w-[174px] items-center gap-2 overflow-hidden rounded-sm border border-white/40 bg-white/50 px-[7px]">
                    <svg viewBox="0 0 24 24" className="h-6 w-6 shrink-0" fill="none" strokeLinecap="round">
                        <rect width="24" height="24" rx="4" fill="#cfd9ff" />
                        <path d="M13 4l3 9c1 3 2 4 4 5" stroke="#453a9c" strokeWidth="3" />
                        <path d="M5 18c4-1 6-7 8-14" stroke="#6f6be0" strokeWidth="3.500" />
                        <path d="M5 18c4 0 5-3 8-3 3 0 4 3 7 3" stroke="#544bc0" strokeWidth="2.500" />
                    </svg>
                    <span className="overflow-hidden whitespace-nowrap">广联达BIM安装计量GQI2021</span>
                    <span className="absolute bottom-0 left-[11px] h-[3px] w-4 rounded-full bg-[#0a70d0]" />
                </button>
                <button className="relative flex h-[38px] items-center gap-2">
                    <svg viewBox="0 0 24 24" className="h-6 w-6 shrink-0">
                        <circle cx="12" cy="12" r="12" fill="#2ea44f" />
                        <path fill="#ea4335" d="M12 12L1.600 6A12 12 0 0 1 22.400 6z" />
                        <path fill="#ea4335" d="M1.600 6L7 15l5-9z" />
                        <path fill="#fbc116" d="M22.400 6A12 12 0 0 1 11.500 24L17 15l-2-9z" />
                        <circle cx="12" cy="12" r="6" fill="#fff" />
                        <circle cx="12" cy="12" r="4.600" fill="#3b7ded" />
                    </svg>
                    我来问_答疑解惑-广联达
                    <span className="absolute bottom-0 left-[9px] h-[3px] w-1.5 rounded-full bg-[#777]" />
                </button>
            </div>
            <div className="absolute right-[7px] top-[7px] text-right text-[#4a5040]">
                <div>17:38:15</div>
                <div>2025/1/6</div>
            </div>
        </div>
    );
}

export default function App() {
    return (
        <div className="flex h-screen flex-col overflow-hidden bg-[#f7f7f7] font-['Noto_Sans','Noto_Sans_CJK_SC',sans-serif] text-xs text-[#303030]">
            <Header />
            <Ribbon />
            <Filters />
            <main className="flex min-h-0 flex-1 bg-white">
                <NavPanel />
                <div className="ml-1 flex w-[411px] shrink-0 flex-col gap-1">
                    <ComponentPanel />
                    <PropertyPanel />
                </div>
                <div className="flex w-1 items-center">
                    <button aria-label="收起" className="h-[100px] w-1 bg-[#5d6674]" />
                </div>
                <div className="relative min-w-0 flex-1 bg-black">
                    <Drawing />
                    <ViewBar />
                    <div className="absolute inset-x-0 bottom-0 flex h-[27px] items-center justify-center gap-1 bg-[#393939]/72 pl-4 font-bold text-white">
                        <svg viewBox="0 0 16 16" className="h-4 w-4" fill="none" stroke="#fff" strokeWidth="1.200"><path d="M15 1L9 7M9 2v5h5M1 15l6-6M2 9h5v5" /></svg>
                        双击根数单元格反查或者点击确定生成图元
                    </div>
                    <button aria-label="收藏" className="absolute bottom-[83px] right-7 flex h-10 w-10 items-center justify-center rounded-full bg-[#1a73e8]">
                        <Star className="h-5 w-5 text-white" fill="#fff" />
                    </button>
                    <LoopDialog />
                </div>
            </main>
            <StatusBar />
            <Taskbar />
        </div>
    );
}
